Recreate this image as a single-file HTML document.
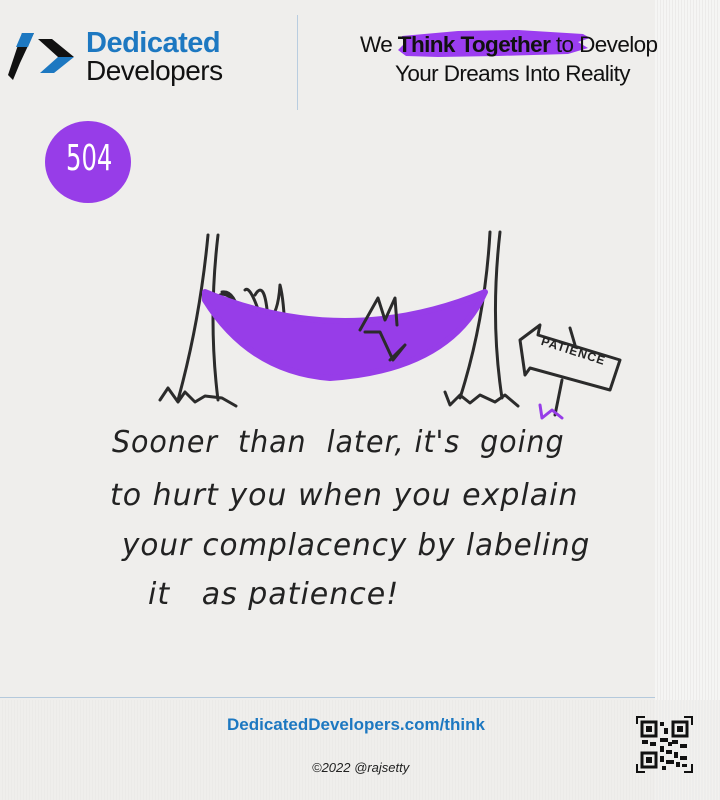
<!DOCTYPE html>
<html><head><meta charset="utf-8"><style>
body{margin:0;width:720px;height:800px;background:#efeeec;position:relative;overflow:hidden;font-family:"Liberation Sans",sans-serif}
.strip{position:absolute;left:655px;top:0;width:65px;height:800px;background:repeating-linear-gradient(90deg,#f5f5f4 0 2px,#ecebea 2px 3px)}
.fstrip{position:absolute;left:0;top:700px;width:720px;height:100px;background:repeating-linear-gradient(90deg,#efeeec 0 2px,#e8e8e6 2px 3px);opacity:.6}
.t{position:absolute;white-space:nowrap}
.hand{position:absolute;font-family:"DejaVu Sans",sans-serif;font-style:italic;font-size:30px;color:#222;letter-spacing:1px;transform-origin:0 0;white-space:nowrap}
</style></head><body>
<div class="strip"></div><div class="fstrip"></div>
<svg style="position:absolute;left:8px;top:33px" width="70" height="48" viewBox="0 0 70 48">
<polygon points="14,0 26,0 12,30 5,47 0,42" fill="#111"/>
<polygon points="14,0 26,0 20,14 8,14" fill="#1d78c1"/>
<polygon points="30,6 44,6 66,24 50,24" fill="#111"/>
<polygon points="50,24 66,24 46,40 32,40" fill="#1d78c1"/>
</svg>
<div class="t" style="left:86px;top:27px;font-size:29px;font-weight:bold;color:#1d78c1;letter-spacing:-.5px">Dedicated</div>
<div class="t" style="left:86px;top:55px;font-size:28px;color:#111;letter-spacing:-.5px">Developers</div>
<div style="position:absolute;left:297px;top:15px;width:1px;height:95px;background:#b9cde0"></div>
<svg style="position:absolute;left:398px;top:28px" width="195" height="32" viewBox="0 0 195 32"><path d="M4 8 L60 3 L120 2 L185 6 L192 10 L180 14 L190 20 L170 26 L100 28 L40 29 L8 28 L0 22 L6 16 Z" fill="#9b3df0"/></svg>
<div class="t" style="left:360px;top:32px;font-size:22.5px;color:#111;letter-spacing:-.6px">We <b>Think Together</b> to Develop</div>
<div class="t" style="left:395px;top:61px;font-size:22.5px;color:#111;letter-spacing:-.6px">Your Dreams Into Reality</div>
<div style="position:absolute;left:45px;top:121px;width:86px;height:82px;border-radius:50%;background:#973de8"></div>
<div class="t" style="left:66px;top:138px;font-size:36px;color:#fff;font-family:'DejaVu Sans Condensed',sans-serif;transform:scaleX(.75);transform-origin:0 0">504</div>
<svg style="position:absolute;left:150px;top:220px" width="480" height="200" viewBox="0 0 480 200" fill="none" stroke="#2b2b2b" stroke-width="3" stroke-linecap="round" stroke-linejoin="round">
<path d="M58 15 Q50 100 28 180 M68 15 Q58 100 68 180 M10 180 L18 168 L28 182 L35 172 L45 182 L55 176 L72 178 L86 186"/>
<path d="M340 12 Q335 100 310 178 M350 12 Q340 100 352 178 M295 172 L300 185 L310 175 L320 183 L330 175 L345 182 L355 175 L368 186"/>
<path d="M72 72 Q85 70 90 98 M70 75 Q80 70 95 100 M95 70 Q100 65 110 95 M105 75 Q115 58 118 100 M118 100 Q128 95 130 65 Q134 80 135 115"/>
<path d="M370 120 L390 105 L388 115 L470 140 L460 170 L380 148 L375 155 Z M420 108 L425 125 M412 160 L405 195"/>
<path d="M55 72 Q195 130 335 72 Q300 150 180 158 Q100 152 55 80 Z" fill="#973de8" stroke="#973de8" stroke-width="6"/>
<path d="M210 110 L228 78 L235 100 L245 78 L247 105 M215 112 L230 112 L243 140 L255 125 L240 140" />
<path d="M390 185 L392 198 L402 190 L412 198" stroke="#973de8"/>
</svg>
<div class="t" style="left:540px;top:344px;font-size:12px;font-weight:bold;color:#222;transform:rotate(18deg);letter-spacing:1px">PATIENCE</div>
<div class="hand" style="left:112px;top:425px;transform:scaleX(.95)">Sooner&nbsp; than &nbsp;later, it's&nbsp; going</div>
<div class="hand" style="left:110px;top:478px;transform:scaleX(1.0)">to hurt you when you explain</div>
<div class="hand" style="left:122px;top:528px;transform:scaleX(.98)">your complacency by labeling</div>
<div class="hand" style="left:148px;top:577px;transform:scaleX(1.0)">it &nbsp; as patience!</div>
<div style="position:absolute;left:0;top:697px;width:655px;height:1px;background:#b4c9dc"></div>
<div class="t" style="left:227px;top:715px;font-size:17px;font-weight:bold;color:#1d78c1">DedicatedDevelopers.com/think</div>
<div class="t" style="left:312px;top:760px;font-size:13px;font-style:italic;color:#222">©2022 @rajsetty</div>
<svg style="position:absolute;left:636px;top:716px" width="57" height="57" viewBox="0 0 57 57">
<path d="M1 8V1h8M48 1h8v8M1 48v8h8M56 48v8h-8" stroke="#111" stroke-width="2" fill="none"/>
<rect x="6" y="6" width="14" height="14" fill="none" stroke="#111" stroke-width="3"/><rect x="10" y="10" width="6" height="6" fill="#111"/>
<rect x="37" y="6" width="14" height="14" fill="none" stroke="#111" stroke-width="3"/><rect x="41" y="10" width="6" height="6" fill="#111"/>
<rect x="6" y="37" width="14" height="14" fill="none" stroke="#111" stroke-width="3"/><rect x="10" y="41" width="6" height="6" fill="#111"/>
<path d="M24 6h4v4h-4zM28 12h4v6h-4zM24 22h8v4h-8zM6 24h6v4H6zM14 26h6v4h-6zM36 24h6v4h-6zM44 28h7v4h-7zM24 30h4v6h-4zM30 34h6v4h-6zM38 36h4v6h-4zM44 40h7v4h-7zM24 40h4v6h-4zM30 44h8v4h-8zM40 46h4v5h-4zM26 50h4v4h-4zM46 48h5v3h-5zM32 26h4v4h-4z" fill="#111"/>
</svg>
</body></html>
